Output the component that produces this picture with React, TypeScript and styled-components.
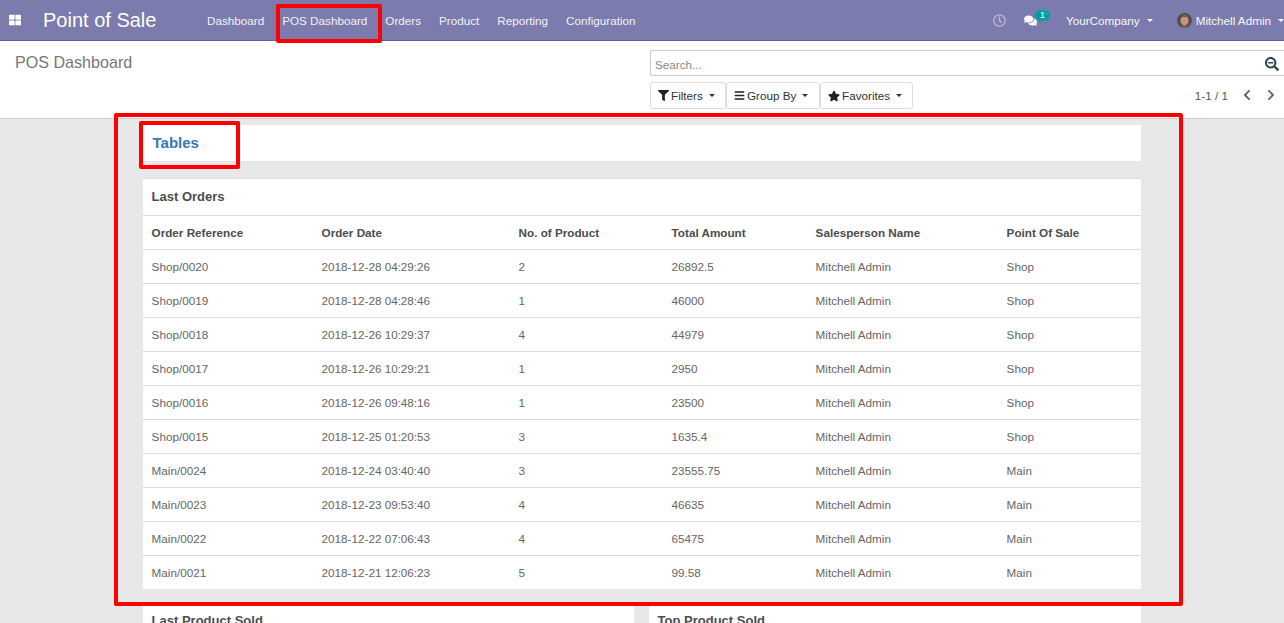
import * as React from 'react'
import styled, { createGlobalStyle } from 'styled-components'
import {
	FaChevronLeft,
	FaChevronRight,
	FaComments,
	FaFilter,
	FaBars,
	FaRegClock,
	FaSearchMinus,
	FaStar,
	FaThLarge,
} from 'react-icons/fa'

const GlobalStyle = createGlobalStyle`
	html, body {
		margin: 0;
		padding: 0;
		height: 100%;
		overflow: hidden;
	}
	body {
		font-family: 'Liberation Sans', Arial, sans-serif;
		font-size: 13px;
		color: #4c4c4c;
		background: #e8e8e8;
	}
`

const Page = styled.div`
	position: relative;
	width: 1284px;
	height: 623px;
	overflow: hidden;
	display: flex;
	flex-direction: column;
`

const Navbar = styled.header`
	flex: 0 0 41px;
	box-sizing: border-box;
	display: flex;
	align-items: center;
	background: #7c7bad;
	border-bottom: 1px solid #5f5e97;
	color: #fff;
`

const AppsButton = styled.span`
	display: flex;
	width: 12px;
	margin-left: 9px;
	margin-right: 22px;
	font-size: 12px;
`

const Brand = styled.span`
	font-size: 20px;
	width: 164px;
`

const NavItem = styled.a`
	color: #fff;
	opacity: 0.9;
	font-size: 11.7px;
	margin-right: ${(p: { $gap: number }) => p.$gap}px;
	white-space: nowrap;
`

const NavRight = styled.div`
	margin-left: auto;
	display: flex;
	align-items: center;
`

const ClockIcon = styled(FaRegClock)`
	font-size: 13px;
	opacity: 0.5;
	margin-right: 18px;
`

const Messages = styled.span`
	position: relative;
	display: flex;
	font-size: 13px;
	margin-right: 29px;
`

const Badge = styled.span`
	position: absolute;
	left: 11px;
	top: -4px;
	width: 15px;
	height: 11px;
	border-radius: 6px;
	background: #00a09d;
	color: #fff;
	font-size: 9px;
	line-height: 11px;
	text-align: center;
`

const Caret = styled.span`
	display: inline-block;
	flex: none;
	width: 0;
	height: 0;
	margin-left: 6px;
	border-top: 3.5px solid currentColor;
	border-left: 3.5px solid transparent;
	border-right: 3.5px solid transparent;
`

const NavCaret = styled(Caret)`
	margin-left: 7px;
	border-top-width: 3px;
	border-left-width: 3px;
	border-right-width: 3px;
`

const UserMenu = styled.span`
	display: flex;
	align-items: center;
	color: #fff;
	font-size: 11.7px;
	white-space: nowrap;
	opacity: 0.95;
	margin-right: ${(p: { $gap: number }) => p.$gap}px;
`

const Avatar = styled.svg`
	width: 15px;
	height: 15px;
	margin-right: 4px;
`

const ControlPanel = styled.section`
	flex: 0 0 78px;
	box-sizing: border-box;
	display: grid;
	grid-template-columns: 650px 1fr;
	background: #fff;
	border-bottom: 1px solid #ccc;
`

const Breadcrumb = styled.h2`
	margin: 11px 0 0 15px;
	font-size: 16.1px;
	line-height: 20px;
	font-weight: 400;
	color: #777;
`

const ControlRight = styled.div`
	display: flex;
	flex-direction: column;
	padding-top: 9px;
`

const SearchBox = styled.div`
	box-sizing: border-box;
	height: 26px;
	display: flex;
	align-items: center;
	justify-content: space-between;
	border: 1px solid #ccc;
	border-radius: 3px 0 0 3px;
	border-right: 0;
	padding: 2px 5px 0 4px;
	color: #888;
	font-size: 11.7px;
`

const SearchIcon = styled(FaSearchMinus)`
	color: #33404d;
	font-size: 14px;
`

const ToolRow = styled.div`
	display: flex;
	align-items: center;
	margin-top: 6px;
`

const FilterButton = styled.button`
	box-sizing: border-box;
	height: 27px;
	padding: 0 7px;
	margin: 0;
	display: flex;
	align-items: center;
	background: #fff;
	border: 1px solid #ddd;
	border-radius: 3px;
	font: inherit;
	font-size: 11.7px;
	color: #333;
	white-space: nowrap;
	width: ${(p: { $w: number }) => p.$w}px;
	svg {
		width: 11px;
		height: 11px;
		margin-right: 2px;
		color: #222;
		flex: none;
	}
`

const StarIcon = styled(FaStar)`
	&& {
		width: 12px;
		height: 12px;
	}
`

const Pager = styled.div`
	margin-left: auto;
	display: flex;
	align-items: center;
	font-size: 11.7px;
	color: #5f5550;
	padding-right: 7px;
`

const PagerArrow = styled.span`
	display: flex;
	position: relative;
	top: -1px;
	color: #666;
	font-size: 12px;
	margin-left: ${(p: { $gap: number }) => p.$gap}px;
`

const Content = styled.main`
	flex: 1;
	min-height: 0;
	padding: 6px 143px 0 143px;
	display: flex;
	flex-direction: column;
`

const TitleBar = styled.div`
	flex: none;
	box-sizing: border-box;
	height: 36px;
	padding: 0 0 2px 9.5px;
	display: flex;
	align-items: center;
	background: #fff;
	color: #337ab7;
	font-size: 15px;
	font-weight: 700;
`

const Card = styled.section`
	flex: none;
	margin-top: 17px;
	background: #fff;
	border-top: 1px solid #ddd;
`

const CardTitle = styled.h3`
	margin: 0;
	box-sizing: border-box;
	height: 36px;
	padding: 0 0 2px 8.6px;
	display: flex;
	align-items: center;
	font-size: 13px;
	font-weight: 700;
	color: #4c4c4c;
`

const Row = styled.div`
	box-sizing: border-box;
	height: 34px;
	display: grid;
	grid-template-columns: 170px 197px 153px 144px 191px 1fr;
	align-items: center;
	padding-left: 8.6px;
	border-top: 1px solid #ddd;
	font-size: 11.7px;
	font-weight: ${(p: { $head?: boolean }) => (p.$head ? 700 : 400)};
	color: ${(p: { $head?: boolean }) => (p.$head ? '#4c4c4c' : '#666')};
`

const BottomCards = styled.div`
	flex: none;
	margin-top: 16px;
	display: grid;
	grid-template-columns: 491px 492px;
	column-gap: 15px;
`

const BottomCard = styled.section`
	background: #fff;
	height: 60px;
`

const BottomTitle = styled(CardTitle)`
	height: 30px;
	padding: 0 0 0 8.6px;
`

type MarkerProp = {
	$x: number
	$y: number
	$w: number
	$h: number
}

const Marker = styled.div<MarkerProp>`
	position: absolute;
	box-sizing: border-box;
	border: 4px solid #f00;
	border-radius: 2px;
	pointer-events: none;
	left: ${(p) => p.$x}px;
	top: ${(p) => p.$y}px;
	width: ${(p) => p.$w}px;
	height: ${(p) => p.$h}px;
`

const navItems: [string, number][] = [
	['Dashboard', 18],
	['POS Dashboard', 18],
	['Orders', 18],
	['Product', 18],
	['Reporting', 18],
	['Configuration', 0],
]

const orders = [
	['Shop/0020', '2018-12-28 04:29:26', '2', '26892.5', 'Shop'],
	['Shop/0019', '2018-12-28 04:28:46', '1', '46000', 'Shop'],
	['Shop/0018', '2018-12-26 10:29:37', '4', '44979', 'Shop'],
	['Shop/0017', '2018-12-26 10:29:21', '1', '2950', 'Shop'],
	['Shop/0016', '2018-12-26 09:48:16', '1', '23500', 'Shop'],
	['Shop/0015', '2018-12-25 01:20:53', '3', '1635.4', 'Shop'],
	['Main/0024', '2018-12-24 03:40:40', '3', '23555.75', 'Main'],
	['Main/0023', '2018-12-23 09:53:40', '4', '46635', 'Main'],
	['Main/0022', '2018-12-22 07:06:43', '4', '65475', 'Main'],
	['Main/0021', '2018-12-21 12:06:23', '5', '99.58', 'Main'],
]

const columns = [
	'Order Reference',
	'Order Date',
	'No. of Product',
	'Total Amount',
	'Salesperson Name',
	'Point Of Sale',
]

const App = () => {
	return (
		<Page>
			<GlobalStyle />
			<Navbar>
				<AppsButton>
					<FaThLarge />
				</AppsButton>
				<Brand>Point of Sale</Brand>
				{navItems.map(([label, gap]) => (
					<NavItem key={label} $gap={gap}>
						{label}
					</NavItem>
				))}
				<NavRight>
					<ClockIcon />
					<Messages>
						<FaComments />
						<Badge>1</Badge>
					</Messages>
					<UserMenu $gap={24}>
						YourCompany
						<NavCaret />
					</UserMenu>
					<UserMenu $gap={0}>
						<Avatar viewBox='0 0 15 15'>
							<circle cx='7.5' cy='7.5' r='7.5' fill='#5d4a3e' />
							<ellipse cx='7.5' cy='7.5' rx='4' ry='5' fill='#c49a80' />
							<path d='M3 6 Q7.5 0 12 6 L11 4.5 Q7.5 3 4 4.5 Z' fill='#3a2c24' />
							<path d='M3 15 Q7.5 10 12 15 Z' fill='#6f6a66' />
						</Avatar>
						Mitchell Admin
						<NavCaret />
					</UserMenu>
				</NavRight>
			</Navbar>
			<ControlPanel>
				<Breadcrumb>POS Dashboard</Breadcrumb>
				<ControlRight>
					<SearchBox>
						Search...
						<SearchIcon />
					</SearchBox>
					<ToolRow>
						<FilterButton $w={76}>
							<FaFilter />
							Filters
							<Caret />
						</FilterButton>
						<FilterButton $w={94}>
							<FaBars />
							Group By
							<Caret />
						</FilterButton>
						<FilterButton $w={93}>
							<StarIcon />
							Favorites
							<Caret />
						</FilterButton>
						<Pager>
							1-1 / 1
							<PagerArrow $gap={13}>
								<FaChevronLeft />
							</PagerArrow>
							<PagerArrow $gap={12}>
								<FaChevronRight />
							</PagerArrow>
						</Pager>
					</ToolRow>
				</ControlRight>
			</ControlPanel>
			<Content>
				<TitleBar>Tables</TitleBar>
				<Card>
					<CardTitle>Last Orders</CardTitle>
					<Row $head>
						{columns.map((c) => (
							<span key={c}>{c}</span>
						))}
					</Row>
					{orders.map(([ref, date, count, total, pos]) => (
						<Row key={ref}>
							<span>{ref}</span>
							<span>{date}</span>
							<span>{count}</span>
							<span>{total}</span>
							<span>Mitchell Admin</span>
							<span>{pos}</span>
						</Row>
					))}
				</Card>
				<BottomCards>
					<BottomCard>
						<BottomTitle>Last Product Sold</BottomTitle>
					</BottomCard>
					<BottomCard>
						<BottomTitle>Top Product Sold</BottomTitle>
					</BottomCard>
				</BottomCards>
			</Content>
			<Marker $x={276} $y={4} $w={106} $h={39} />
			<Marker $x={114} $y={113} $w={1069} $h={493} />
			<Marker $x={139} $y={121} $w={101} $h={48} />
		</Page>
	)
}

export default App
